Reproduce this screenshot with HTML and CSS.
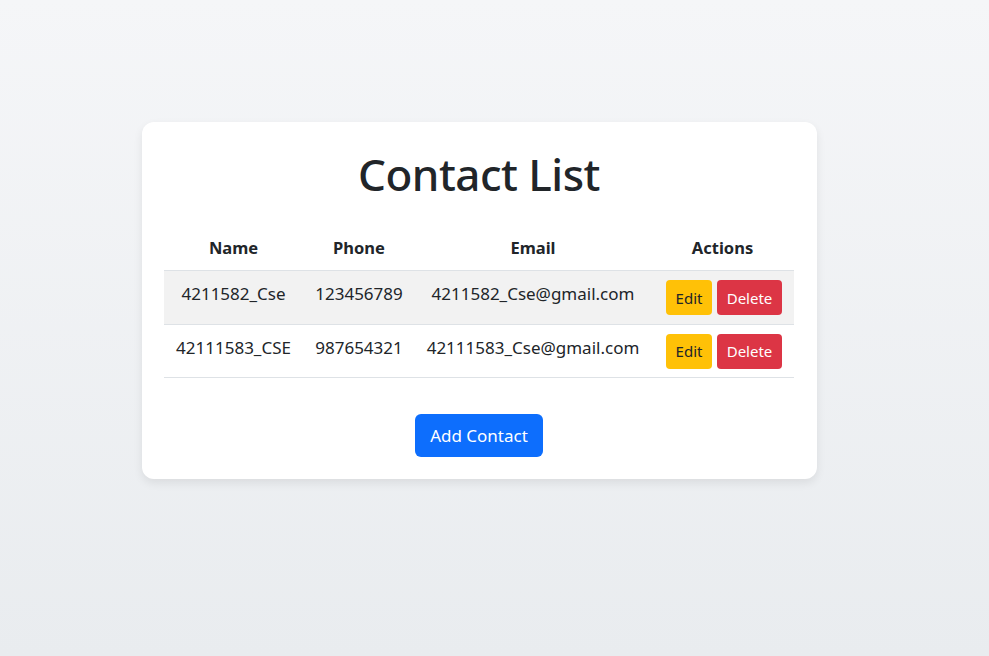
FILE: index.html
```html
<!DOCTYPE html>
<html lang="en">
<head>
<meta charset="utf-8">
<title>Contact List</title>
<link rel="stylesheet" href="styles.css">
</head>
<body>
<div class="page">
  <div class="card">
    <h1 class="title">Contact List</h1>
    <table class="contacts">
      <colgroup>
        <col class="c-name"><col class="c-phone"><col class="c-email"><col class="c-actions">
      </colgroup>
      <thead>
        <tr><th>Name</th><th>Phone</th><th>Email</th><th>Actions</th></tr>
      </thead>
      <tbody>
        <tr class="striped">
          <td>4211582_Cse</td><td>123456789</td><td>4211582_Cse@gmail.com</td>
          <td><div class="actions"><button class="btn btn-edit">Edit</button><button class="btn btn-delete">Delete</button></div></td>
        </tr>
        <tr>
          <td>42111583_CSE</td><td>987654321</td><td>42111583_Cse@gmail.com</td>
          <td><div class="actions"><button class="btn btn-edit">Edit</button><button class="btn btn-delete">Delete</button></div></td>
        </tr>
      </tbody>
    </table>
    <div class="footer">
      <button class="btn-add">Add Contact</button>
    </div>
  </div>
</div>
</body>
</html>
```

FILE: styles.css
```css
* { box-sizing: border-box; }
html, body { height: 100%; }
body {
  margin: 0;
  font-family: "Noto Sans", "Open Sans", sans-serif;
  color: #212529;
  background: linear-gradient(180deg, #f5f6f8 0%, #e9ecef 100%);
}
.page {
  display: flex;
  justify-content: center;
  padding: 122px 30px 0 0;
}
.card {
  width: 675px;
  background: #fff;
  border-radius: 12px;
  box-shadow: 0 4px 10px rgba(0, 0, 0, 0.08);
  padding: 22px 23px 22px 22px;
}
.title {
  margin: 0 0 22px;
  height: 60px;
  line-height: 60px;
  font-size: 44px;
  font-weight: 500;
  text-align: center;
  letter-spacing: -0.5px;
}
.contacts {
  width: 630px;
  border-collapse: collapse;
  table-layout: fixed;
  font-size: 17px;
}
.c-name { width: 139px; }
.c-phone { width: 112px; }
.c-email { width: 236px; }
.c-actions { width: 143px; }
.contacts th, .contacts td {
  text-align: center;
  padding: 0;
  white-space: nowrap;
}
.contacts th {
  height: 44px;
  font-weight: 700;
  font-size: 16.5px;
  border-bottom: 1px solid #dee2e6;
}
.contacts tbody tr { border-bottom: 1px solid #dee2e6; }
.contacts tbody tr:first-child td { height: 54px; padding-bottom: 8px; }
.contacts tbody tr:last-child td { height: 53px; padding-bottom: 6px; }
.contacts tbody tr td:last-child { padding-bottom: 0; padding-top: 1px; }
.striped { background: #f2f2f2; }
.actions {
  display: flex;
  justify-content: center;
  gap: 5px;
  padding-left: 3px;
}
.btn {
  border: none;
  border-radius: 4px;
  height: 35px;
  font-family: inherit;
  font-size: 15px;
  padding: 0;
  cursor: pointer;
}
.btn-edit { background: #ffc107; color: #212529; width: 46px; }
.btn-delete { background: #dc3545; color: #fff; width: 65px; }
.footer {
  display: flex;
  justify-content: center;
  padding-top: 36px;
}
.btn-add {
  width: 128px;
  height: 43px;
  border: none;
  border-radius: 6px;
  background: #0d6efd;
  color: #fff;
  font-family: inherit;
  font-size: 17px;
  cursor: pointer;
}
```
